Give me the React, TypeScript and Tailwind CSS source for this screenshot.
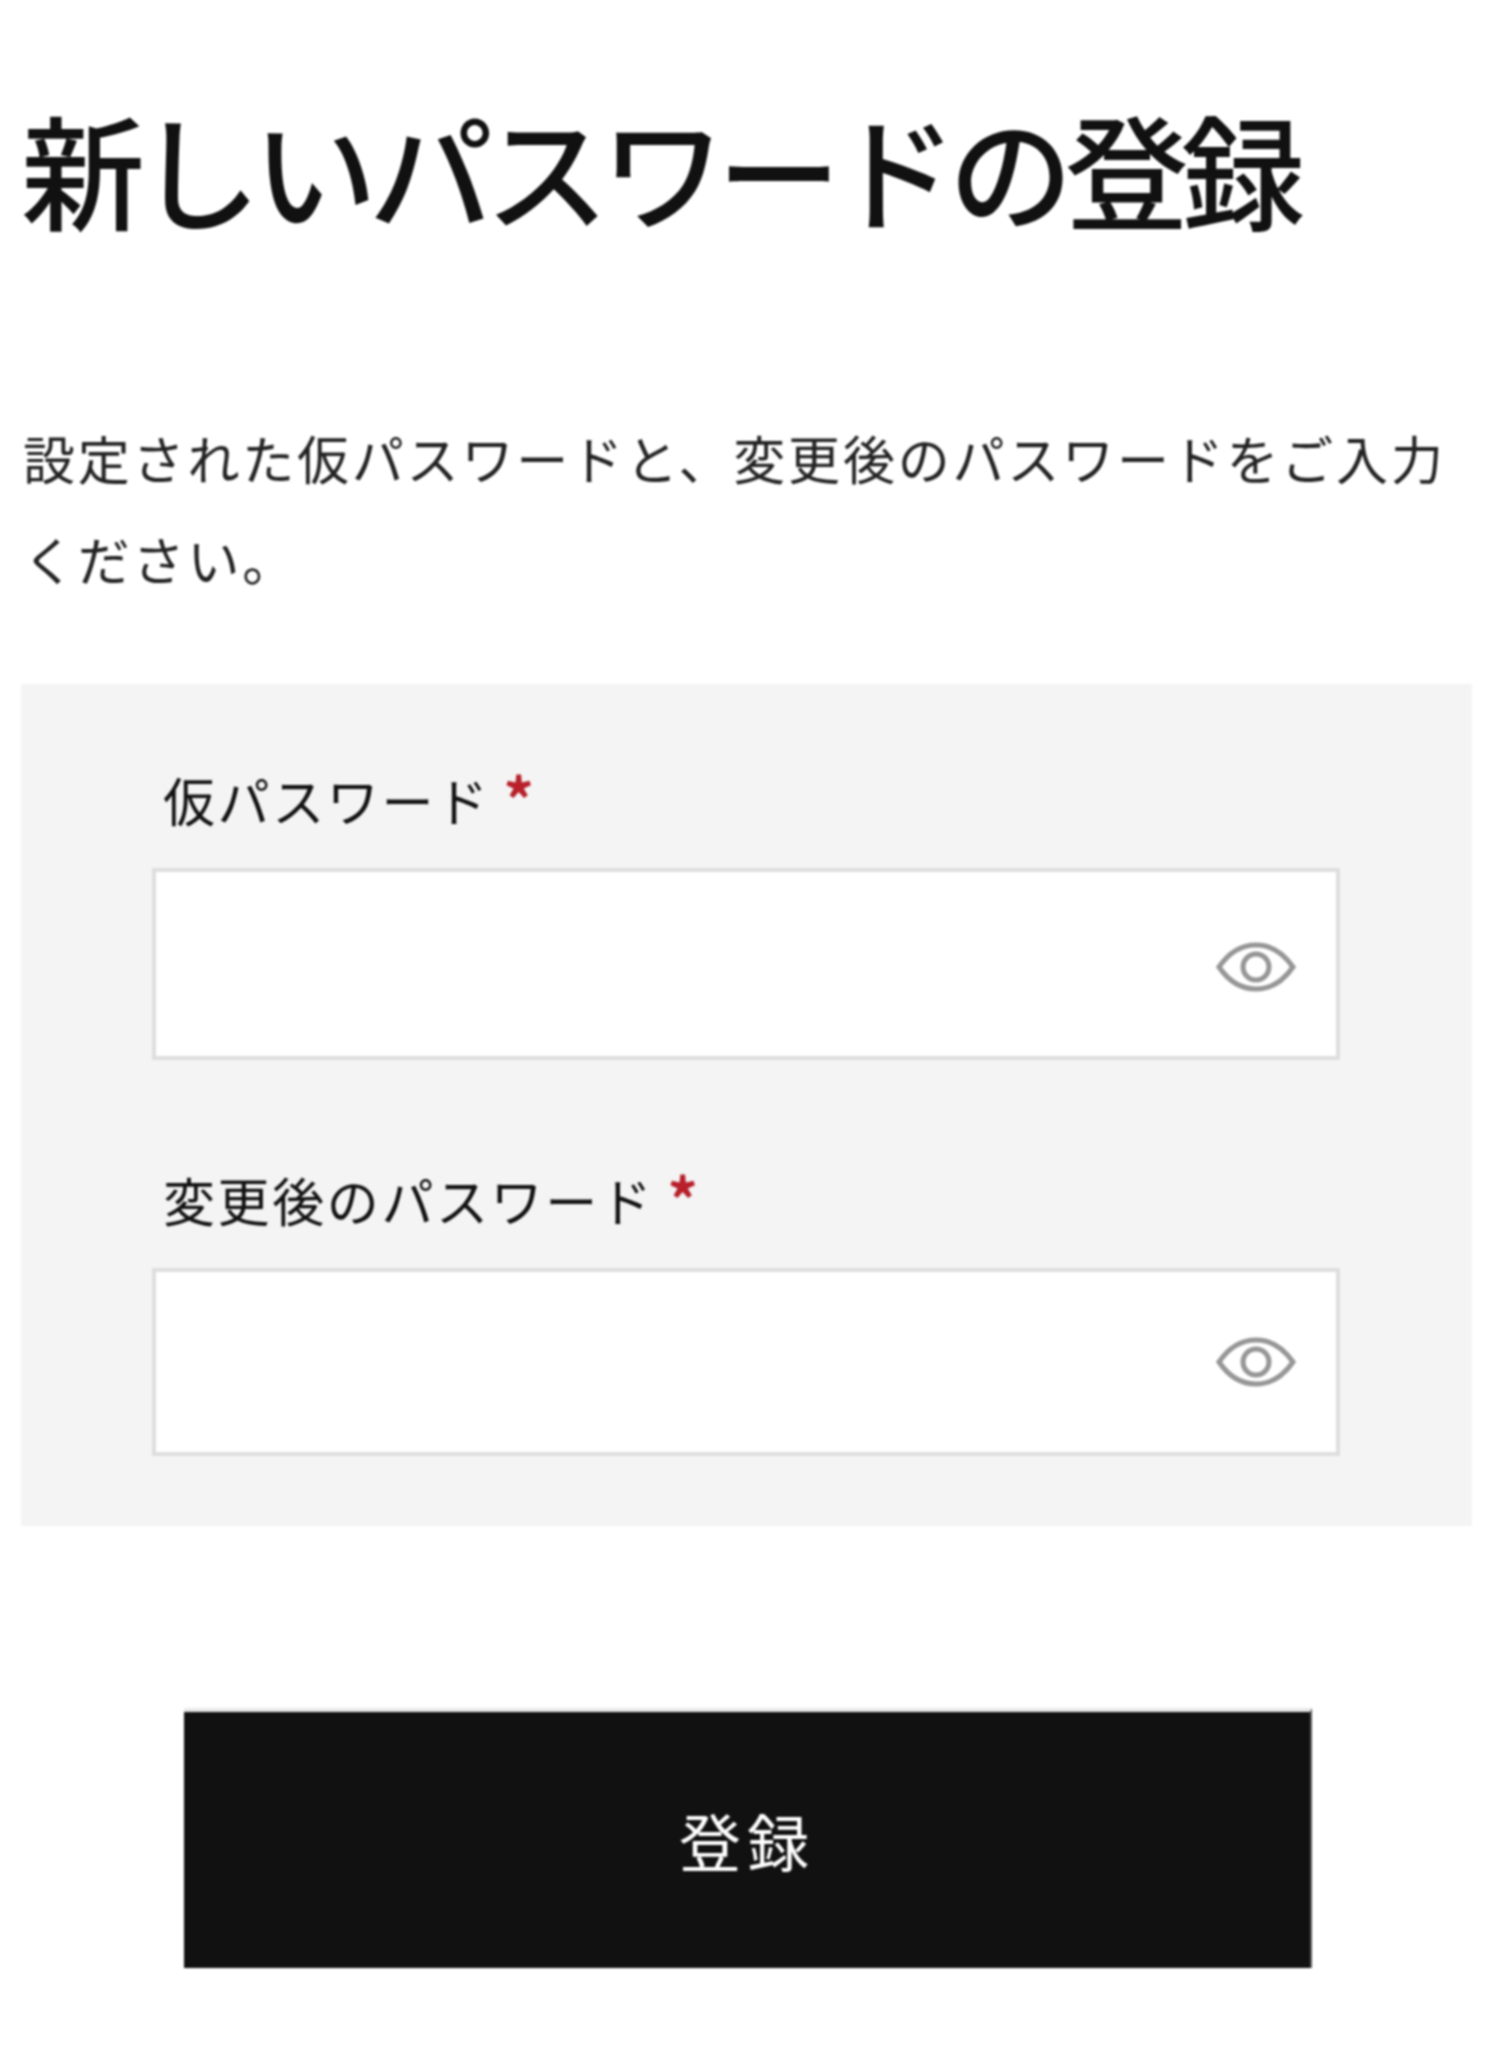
const jp = "font-['Noto_Sans_CJK_JP','Noto_Sans',sans-serif]";

function EyeIcon() {
  return (
    <svg viewBox="0 0 80 56" className="w-[80px] h-[56px]" fill="none" stroke="#969696" strokeWidth="5">
      <path d="M3 28 C14 12 27 6 40 6 C53 6 66 12 77 28 C66 44 53 50 40 50 C27 50 14 44 3 28 Z" />
      <circle cx="40" cy="28" r="13" />
    </svg>
  );
}

function PasswordField({ label, height }: { label: string; height: string }) {
  return (
    <div>
      <label className="flex items-start pl-[11px] text-[52px] leading-[72px] tracking-[2.6px] text-[#111111]">
        {label}
        <span className="ml-[13px] text-[#b8202a] text-[60px] font-bold leading-[66px]">*</span>
      </label>
      <div className={`mt-[32px] flex items-center justify-end pr-[40px] bg-white border-[4px] border-[#dedede] ${height}`}>
        <EyeIcon />
      </div>
    </div>
  );
}

export default function App() {
  return (
    <div className={`${jp} w-[1500px] h-[2060px] bg-white blur-[1px]`}>
      <div className="pl-[21px] pr-[28px] pt-[82px]">
        <h1 className="text-[124px] leading-[170px] tracking-[-8px] font-medium text-[#111111] whitespace-nowrap">新しいパスワードの登録</h1>
        <p className="mt-[155px] pl-[2px] text-[52px] leading-[101px] tracking-[2.8px] text-[#222222]">
          設定された仮パスワードと、変更後のパスワードをご入力ください。
        </p>
        <div className="mt-[75px] h-[842px] bg-[#f4f4f4] pt-[80px] pl-[131px] pr-[132px] flex flex-col gap-[104px]">
          <PasswordField label="仮パスワード" height="h-[192px] pt-[5px]" />
          <PasswordField label="変更後のパスワード" height="h-[188px]" />
        </div>
        <button className="mt-[182px] ml-[163px] w-[1128px] h-[260px] bg-[#111111] text-white text-[62px] tracking-[6px] border-t-[4px] border-r-[2px] border-t-[#e8e8e8] border-r-[#555555] flex items-center justify-center">
          登録
        </button>
      </div>
    </div>
  );
}
